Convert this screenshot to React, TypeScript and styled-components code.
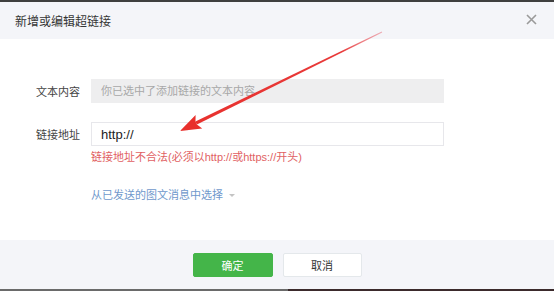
import styled, { createGlobalStyle } from 'styled-components';

const GlobalStyle = createGlobalStyle`
  html, body {
    margin: 0;
    padding: 0;
    background: #ffffff;
  }
  body {
    font-family: "Liberation Sans", "Noto Sans CJK SC", sans-serif;
  }
`;

const Page = styled.div`
  position: relative;
  width: 554px;
  height: 291px;
  overflow: hidden;
  display: flex;
  flex-direction: column;
`;

const Strip = styled.div<{ $split?: boolean }>`
  height: 2px;
  flex: none;
  background: ${(p) => (p.$split ? 'linear-gradient(to right, #6a6a6a 0 288px, #3b2a2c 288px)' : '#3f3f3f')};
`;

const Header = styled.div`
  height: 37px;
  flex: none;
  background: #f4f5f9;
  display: flex;
  align-items: center;
  justify-content: space-between;
  padding: 0 17px 0 15px;
`;

const Title = styled.div`
  font-size: 12px;
  color: #353535;
`;

const CloseButton = styled.button`
  border: none;
  background: none;
  padding: 0;
  width: 12px;
  height: 12px;
  display: flex;
  align-items: center;
  justify-content: center;
  margin-top: -2px;
`;

const Body = styled.div`
  height: 201px;
  flex: none;
  background: #ffffff;
  padding: 40px 0 0 91px;
  box-sizing: border-box;
`;

const Row = styled.div<{ $gap?: number }>`
  position: relative;
  display: flex;
  align-items: center;
  margin-top: ${(p) => p.$gap ?? 0}px;
`;

const Label = styled.label`
  position: absolute;
  right: 100%;
  margin-right: 11px;
  font-size: 11px;
  color: #444;
  white-space: nowrap;
`;

const Field = styled.input<{ $disabled?: boolean }>`
  width: 353px;
  height: 24px;
  box-sizing: border-box;
  padding: 0 9px;
  font-family: inherit;
  font-size: ${(p) => (p.$disabled ? '11px' : '13px')};
  color: #222;
  background: ${(p) => (p.$disabled ? '#eeeeef' : '#ffffff')};
  border: 1px solid ${(p) => (p.$disabled ? '#eeeeef' : '#e7e7eb')};
  outline: none;
  &::placeholder {
    color: #a8a8a8;
  }
`;

const ErrorText = styled.div`
  margin-top: 3px;
  font-size: 11px;
  line-height: 16px;
  color: #e15f63;
`;

const PickLink = styled.a`
  display: inline-flex;
  align-items: center;
  gap: 6px;
  margin-top: 22px;
  font-size: 11px;
  line-height: 16px;
  color: #6f98cc;
  cursor: pointer;
`;

const Caret = styled.span`
  width: 0;
  height: 0;
  border-left: 3px solid transparent;
  border-right: 3px solid transparent;
  border-top: 3px solid #c4c4c4;
`;

const Footer = styled.div`
  height: 49px;
  flex: none;
  background: #f4f5f9;
  display: flex;
  justify-content: center;
  gap: 10px;
  padding-top: 13px;
  box-sizing: border-box;
`;

const Button = styled.button<{ $primary?: boolean }>`
  width: ${(p) => (p.$primary ? 80 : 79)}px;
  height: 24px;
  border-radius: 2px;
  font-family: inherit;
  font-size: 11px;
  border: 1px solid ${(p) => (p.$primary ? '#44b549' : '#e4e8eb')};
  background: ${(p) => (p.$primary ? '#44b549' : '#ffffff')};
  color: ${(p) => (p.$primary ? '#ffffff' : '#333')};
  cursor: pointer;
`;

const ArrowLayer = styled.svg`
  position: absolute;
  left: 0;
  top: 0;
  pointer-events: none;
`;

function Annotation() {
  const tip = { x: 180, y: 131 };
  const tail = { x: 382, y: 32 };
  const dx = tail.x - tip.x;
  const dy = tail.y - tip.y;
  const len = Math.hypot(dx, dy);
  const ux = dx / len;
  const uy = dy / len;
  const nx = -uy;
  const ny = ux;
  const headLen = 21;
  const headHalf = 7.5;
  const bx = tip.x + ux * headLen;
  const by = tip.y + uy * headLen;
  const pt = (x: number, y: number) => `${x.toFixed(1)},${y.toFixed(1)}`;
  const head = [
    pt(tip.x, tip.y),
    pt(bx + nx * headHalf, by + ny * headHalf),
    pt(bx - ux * 3 + nx * 1.6, by - uy * 3 + ny * 1.6),
    pt(bx - ux * 3 - nx * 1.6, by - uy * 3 - ny * 1.6),
    pt(bx - nx * headHalf, by - ny * headHalf),
  ].join(' ');
  const shaft = [
    pt(bx - ux * 3 + nx * 1.7, by - uy * 3 + ny * 1.7),
    pt(tail.x + nx * 0.4, tail.y + ny * 0.4),
    pt(tail.x - nx * 0.4, tail.y - ny * 0.4),
    pt(bx - ux * 3 - nx * 1.7, by - uy * 3 - ny * 1.7),
  ].join(' ');
  return (
    <ArrowLayer width="554" height="291" viewBox="0 0 554 291">
      <defs>
        <linearGradient id="fade" x1={tip.x} y1={tip.y} x2={tail.x} y2={tail.y} gradientUnits="userSpaceOnUse">
          <stop offset="0" stopColor="#e8302c" />
          <stop offset="0.8" stopColor="#e83a3a" />
          <stop offset="1" stopColor="#e87a86" stopOpacity="0.6" />
        </linearGradient>
      </defs>
      <polygon points={shaft} fill="url(#fade)" />
      <polygon points={head} fill="#e8302c" />
    </ArrowLayer>
  );
}

export default function App() {
  return (
    <>
      <GlobalStyle />
      <Page>
        <Strip />
        <Header>
          <Title>新增或编辑超链接</Title>
          <CloseButton aria-label="关闭">
            <svg width="11" height="11" viewBox="0 0 11 11">
              <path d="M1 1L10 10M10 1L1 10" stroke="#9a9a9a" strokeWidth="1.6" />
            </svg>
          </CloseButton>
        </Header>
        <Body>
          <Row>
            <Label>文本内容</Label>
            <Field $disabled disabled placeholder="你已选中了添加链接的文本内容" />
          </Row>
          <Row $gap={19}>
            <Label>链接地址</Label>
            <Field defaultValue="http://" />
          </Row>
          <ErrorText>链接地址不合法(必须以http://或https://开头)</ErrorText>
          <PickLink>
            从已发送的图文消息中选择
            <Caret />
          </PickLink>
        </Body>
        <Footer>
          <Button $primary>确定</Button>
          <Button>取消</Button>
        </Footer>
        <Strip $split />
        <Annotation />
      </Page>
    </>
  );
}
